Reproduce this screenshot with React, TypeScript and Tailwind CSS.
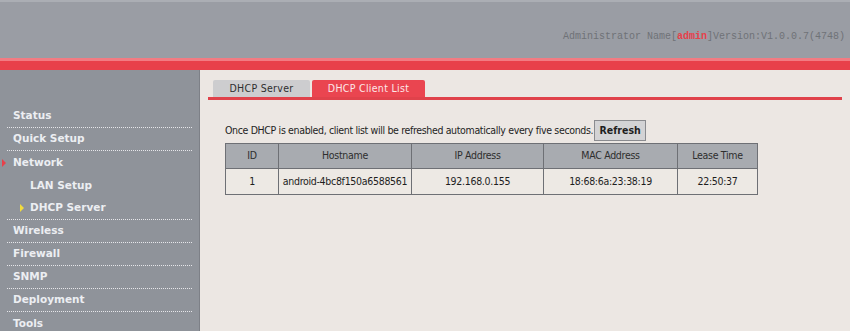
import React from "react"

const menu = [
    {label: "Status", line: true},
    {label: "Quick Setup", line: true},
    {label: "Network", mark: "red"},
    {label: "LAN Setup", sub: true},
    {label: "DHCP Server", sub: true, mark: "yellow", line: true},
    {label: "Wireless", line: true},
    {label: "Firewall", line: true},
    {label: "SNMP", line: true},
    {label: "Deployment", line: true},
    {label: "Tools"},
]

const clients = [
    {id: 1, host: "android-4bc8f150a6588561", ip: "192.168.0.155", mac: "18:68:6a:23:38:19", lease: "22:50:37"},
]

function Sidebar() {
    return <div className="w-[200px] shrink-0 bg-[#8f939a] border-r border-[#7d8087] pt-[35px] font-['DejaVu_Sans',sans-serif]">
        {menu.map(item => <div key={item.label} className={"mx-[7px] h-[23px] flex items-center relative " + (item.line ? "border-b border-dotted border-[#e6e6ea]" : "")}>
            {item.mark === "red" && <span className="absolute left-[-5px] w-0 h-0 border-y-[4px] border-y-transparent border-l-[4px] border-l-[#e8404a]" />}
            {item.mark === "yellow" && <span className="absolute left-[13px] w-0 h-0 border-y-[4px] border-y-transparent border-l-[4px] border-l-[#f2dc3c]" />}
            <span className={"text-[10.5px] font-bold text-[#eceef2] " + (item.sub ? "pl-[23px]" : "pl-[6px]")}>{item.label}</span>
        </div>)}
    </div>
}

export default function App() {
    const cell = "border border-[#6e7075] text-center tracking-[-0.3px]"

    return <div className="w-[850px] h-[331px] overflow-hidden flex flex-col bg-[#ece7e3]">
        <div className="h-[58px] shrink-0 bg-[#9a9da4] border-t-2 border-[#abaeb4] flex items-start justify-end pr-[5px] pt-[27px]">
            <span className="font-['Liberation_Mono',monospace] text-[10px] text-[#6f7277]">
                Administrator Name[<span className="text-[#e8404a] font-bold">admin</span>]Version:V1.0.0.7(4748)
            </span>
        </div>
        <div className="h-[12px] shrink-0 bg-[#e8404a] border-t-[3px] border-[#f27b82]" />

        <div className="flex flex-1">
            <Sidebar />

            <div className="flex-1 pt-[10px] pl-[8px] pr-[8px] font-['DejaVu_Sans_Condensed','Liberation_Sans',sans-serif]">
                <div className="flex items-end pl-[5px] border-b-[3px] border-[#e0424b] h-[20px]">
                    <div className="w-[97px] h-[17px] bg-[#cdcdcf] rounded-t-[2px] flex items-center justify-center text-[10.5px] text-[#2e2e2e] tracking-[0.3px]">DHCP Server</div>
                    <div className="ml-[2px] w-[113px] h-[17px] bg-[#ea4550] rounded-t-[2px] flex items-center justify-center text-[10.5px] text-[#fde8e8] tracking-[0.3px]">DHCP Client List</div>
                </div>

                <div className="pl-[17px] mt-[20px]">
                    <div className="flex items-center h-[21px]">
                        <span className="text-[10.5px] text-[#1e1e1e] tracking-[-0.35px]">Once DHCP is enabled, client list will be refreshed automatically every five seconds.</span>
                        <button className="ml-[1px] w-[52px] h-[21px] bg-[#d3d3d5] border border-[#8a8b8f] text-[10.5px] font-bold text-[#1e1e1e]">Refresh</button>
                    </div>

                    <table className="mt-[2px] border-collapse text-[10.5px] text-[#1e1e1e]">
                        <thead>
                            <tr className="bg-[#a8abb0] h-[25px] text-[#2e2e2e]">
                                <th className={cell + " w-[53px] font-normal"}>ID</th>
                                <th className={cell + " w-[133px] font-normal"}>Hostname</th>
                                <th className={cell + " w-[132px] font-normal"}>IP Address</th>
                                <th className={cell + " w-[134px] font-normal"}>MAC Address</th>
                                <th className={cell + " w-[80px] font-normal"}>Lease Time</th>
                            </tr>
                        </thead>
                        <tbody>
                            {clients.map(c => <tr key={c.id} className="bg-[#ede9e4] h-[26px]">
                                <td className={cell}>{c.id}</td>
                                <td className={cell}>{c.host}</td>
                                <td className={cell}>{c.ip}</td>
                                <td className={cell}>{c.mac}</td>
                                <td className={cell}>{c.lease}</td>
                            </tr>)}
                        </tbody>
                    </table>
                </div>
            </div>
        </div>
    </div>
}
